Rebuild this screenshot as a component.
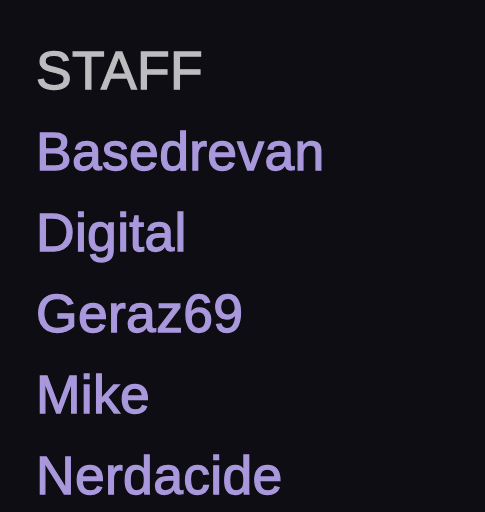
export default function App() {
  const names = ["Basedrevan", "Digital", "Geraz69", "Mike", "Nerdacide"];
  return (
    <div className="w-[485px] h-[512px] bg-[#0e0d14] overflow-hidden pl-[36px] pt-[30px] text-[53.5px] leading-[81px] tracking-[0.3px] [font-family:'Liberation_Sans',Arial,sans-serif] antialiased [-webkit-text-stroke:1.3px_currentColor]">
      <div className="text-[#bdbdc0]">STAFF</div>
      {names.map((n) => (
        <div key={n} className="text-[#a998dc]">
          {n}
        </div>
      ))}
    </div>
  );
}
